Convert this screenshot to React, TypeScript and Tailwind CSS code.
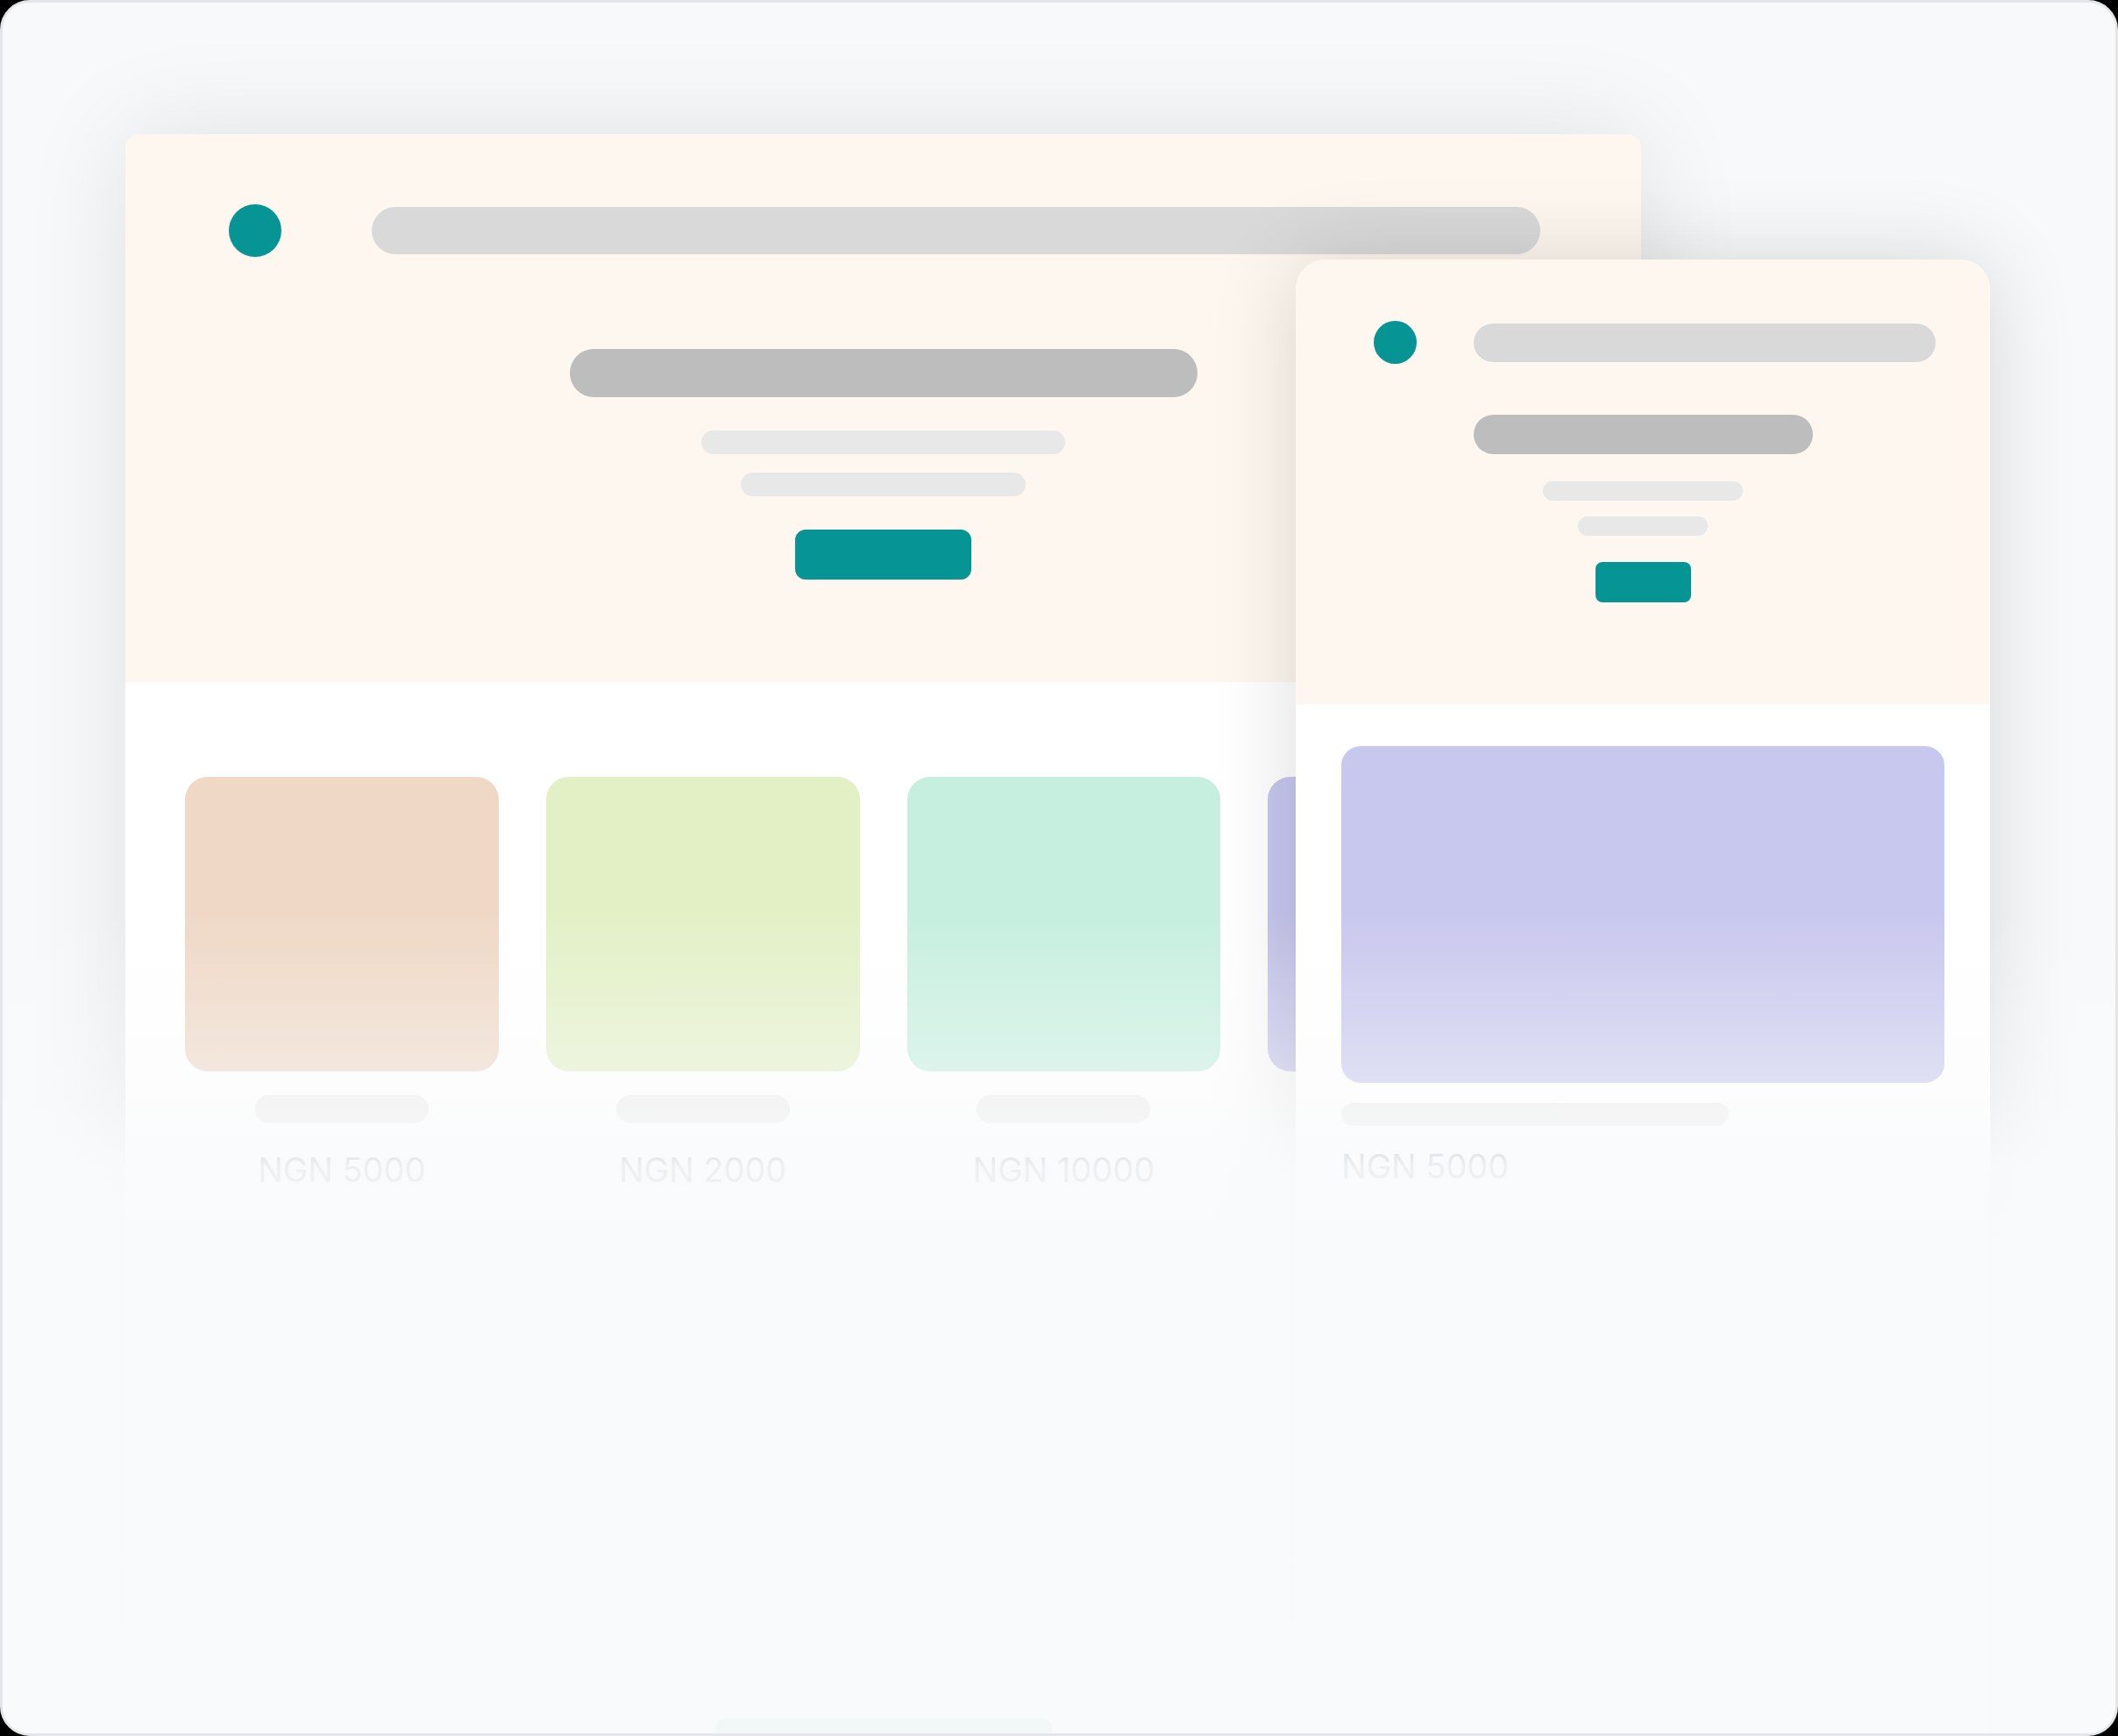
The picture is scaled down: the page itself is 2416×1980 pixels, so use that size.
import React from "react";

interface Product {
  color: string;
  price: string;
}

const products: Product[] = [
  { color: "bg-[#efd8c6]", price: "NGN 5000" },
  { color: "bg-[#e3f0c6]", price: "NGN 2000" },
  { color: "bg-[#c6efdf]", price: "NGN 10000" },
  { color: "bg-[#c7c6ee]", price: "NGN 5000" },
];

const DesktopWindow: React.FC = () => (
  <div className="absolute left-[140px] top-[150px] w-[1729px] h-[1900px] rounded-t-[16px] bg-white overflow-hidden shadow-[0_0_120px_rgba(0,0,0,0.10)]">
    {/* Hero */}
    <div className="h-[625px] bg-[#fdf7ef] flex flex-col items-center">
      <div className="w-full flex items-center pt-[80px] pl-[118px] pr-[115px] gap-[103px]">
        <div className="w-[60px] h-[60px] rounded-full bg-[#069494] shrink-0" />
        <div className="flex-1 h-[54px] rounded-full bg-[#d9d9d9]" />
      </div>
      <div className="mt-[105px] w-[716px] h-[55px] rounded-full bg-[#bdbdbd]" />
      <div className="mt-[38px] w-[415px] h-[27px] rounded-full bg-[#e8e8e8]" />
      <div className="mt-[21px] w-[325px] h-[27px] rounded-full bg-[#e8e8e8]" />
      <div className="mt-[38px] w-[201px] h-[57px] rounded-[12px] bg-[#069494]" />
    </div>

    {/* Product grid */}
    <div className="pt-[108px] px-[68px] grid grid-cols-4 gap-x-[54px]">
      {products.map((p, i) => (
        <div key={i} className="flex flex-col items-center">
          <div className={`w-full h-[336px] rounded-[26px] ${p.color}`} />
          <div className="mt-[27px] w-[198px] h-[32px] rounded-full bg-[#ececec]" />
          <div className="mt-[34px] text-[38px] leading-none text-[#6b7280] font-['Inter',sans-serif]">
            {p.price}
          </div>
        </div>
      ))}
    </div>

    <div className="mt-[607px] flex justify-center">
      <div className="w-[384px] h-[64px] rounded-[12px] bg-[#069494]" />
    </div>
  </div>
);

const MobileWindow: React.FC = () => (
  <div className="absolute left-[1475px] top-[293px] w-[792px] h-[1800px] rounded-t-[34px] bg-white overflow-hidden shadow-[0_0_100px_rgba(0,0,0,0.14)]">
    <div className="h-[507px] bg-[#fdf7ef] flex flex-col items-center">
      <div className="w-full flex items-center pt-[70px] pl-[89px] pr-[62px] gap-[65px]">
        <div className="w-[49px] h-[49px] rounded-full bg-[#069494] shrink-0" />
        <div className="flex-1 h-[44px] rounded-full bg-[#d9d9d9]" />
      </div>
      <div className="mt-[58px] w-[387px] h-[45px] rounded-full bg-[#bdbdbd]" />
      <div className="mt-[31px] w-[228px] h-[22px] rounded-full bg-[#e8e8e8]" />
      <div className="mt-[18px] w-[148px] h-[22px] rounded-full bg-[#e8e8e8]" />
      <div className="mt-[30px] w-[109px] h-[46px] rounded-[8px] bg-[#069494]" />
    </div>

    <div className="pt-[48px] px-[52px] flex flex-col">
      <div className="w-full h-[384px] rounded-[22px] bg-[#c8c7ee]" />
      <div className="mt-[23px] w-[442px] h-[26px] rounded-full bg-[#ececec]" />
      <div className="mt-[27px] text-[38px] leading-none text-[#6b7280] font-['Inter',sans-serif]">
        NGN 5000
      </div>
    </div>
  </div>
);

export default function App() {
  return (
    <div className="w-[2416px] h-[1980px] bg-black">
      <div className="relative w-full h-full rounded-[34px] border-[3px] border-[#e4e6e9] bg-[#f8f9fb] overflow-hidden">
        <DesktopWindow />
        <MobileWindow />
        {/* bottom fade */}
        <div className="absolute left-0 right-0 top-[1037px] bottom-0 pointer-events-none bg-[linear-gradient(to_bottom,rgba(249,250,251,0)_0%,rgba(249,250,251,0.43)_19%,rgba(249,250,251,0.6)_24%,rgba(249,250,251,0.92)_31%,rgba(249,250,251,0.96)_40%,rgba(249,250,251,0.97)_100%)]" />
      </div>
    </div>
  );
}
